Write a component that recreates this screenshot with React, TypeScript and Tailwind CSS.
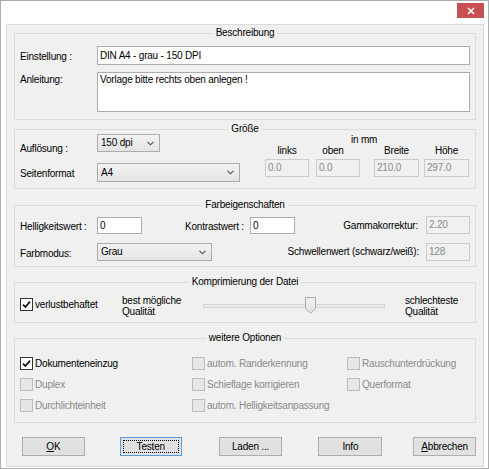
import React from 'react';

type Kids = { children?: React.ReactNode };

const line = 'border-[#dcdcdc]';

// Windows-style group box: caption sits centred in the top edge
const GroupBox = ({ title, bodyClass, children }: { title: string; bodyClass: string } & Kids) => (
  <div className="flex flex-col">
    <div className="flex h-[12px]">
      <div className={`mt-[6px] flex-1 border-l border-t ${line}`} />
      <span className="px-[3px] leading-[12px]">{title}</span>
      <div className={`mt-[6px] flex-1 border-r border-t ${line}`} />
    </div>
    <div className={`border-x border-b ${line} ${bodyClass}`}>{children}</div>
  </div>
);

const TextBox = ({ value, disabled, className = '' }: { value: string; disabled?: boolean; className?: string }) => (
  <div
    className={`flex items-center border px-[2px] leading-[12px] ${
      disabled ? 'border-[#cccccc] bg-[#f0f0f0] text-[#8a8a8a]' : 'border-[#abadb3] bg-white'
    } ${className}`}
  >
    {value}
  </div>
);

const Chevron = () => (
  <svg width="7" height="5" viewBox="0 0 7 5">
    <path d="M0.5 0.8 L3.5 3.8 L6.5 0.8" stroke="#505050" strokeWidth="1.1" fill="none" />
  </svg>
);

const Combo = ({ value, className = '' }: { value: string; className?: string }) => (
  <div
    className={`flex items-center justify-between border border-[#acacac] bg-linear-to-b from-[#f2f2f2] to-[#e4e4e4] pl-[3px] pr-[5px] leading-[12px] ${className}`}
  >
    <span>{value}</span>
    <Chevron />
  </div>
);

const Check = ({ checked, disabled }: { checked?: boolean; disabled?: boolean }) => (
  <span
    className={`flex h-[13px] w-[13px] shrink-0 items-center justify-center border ${
      disabled ? 'border-[#bcbcbc] bg-[#e6e6e6]' : 'border-[#333333] bg-white'
    }`}
  >
    {checked && (
      <svg width="9" height="9" viewBox="0 0 9 9">
        <path d="M1 4.6 L3.4 7 L8 1.6" stroke="#111" strokeWidth="1.7" fill="none" />
      </svg>
    )}
  </span>
);

const Option = ({ label, checked, disabled }: { label: string; checked?: boolean; disabled?: boolean }) => (
  <div className="flex h-[13px] items-center gap-[2px]">
    <Check checked={checked} disabled={disabled} />
    <span className={`leading-[12px] ${disabled ? 'text-[#8a8a8a]' : ''}`}>{label}</span>
  </div>
);

const Button = ({ children, className = '', focused }: { className?: string; focused?: boolean } & Kids) => (
  <button
    className={`h-[19px] border bg-[#e1e1e1] leading-[12px] ${
      focused ? 'border-[#569de5] p-[2px]' : 'border-[#adadad]'
    } ${className}`}
  >
    {focused ? (
      <span className="flex h-full w-full items-center justify-center border border-dotted border-black">{children}</span>
    ) : (
      children
    )}
  </button>
);

export default function App() {
  return (
    <div className="flex h-[469px] w-[489px] flex-col border border-[#adadad] bg-white font-['Liberation_Sans',Arial,sans-serif] text-[10px] tracking-[-0.2px] text-black">
      {/* title bar */}
      <div className="flex h-[23px] justify-end pr-[4px] pt-[2px]">
        <div className="flex h-[15px] w-[27px] items-center justify-center bg-[#c75050]">
          <svg width="8" height="8" viewBox="0 0 8 8">
            <path d="M1 1 L7 7 M7 1 L1 7" stroke="#fff" strokeWidth="1.6" />
          </svg>
        </div>
      </div>

      <div className="mb-[1px] ml-[5px] mr-[4px] flex h-[443px] flex-col border border-[#dadada] bg-[#f0f0f0] px-[7px] pt-[2px]">
        <GroupBox title="Beschreibung" bodyClass="flex h-[81px] flex-col gap-[7px] px-[5px] pt-[7px]">
          <div className="flex">
            <span className="mt-[5px] w-[77px] leading-[12px]">Einstellung :</span>
            <TextBox value="DIN A4 - grau - 150 DPI" className="h-[19px] flex-1" />
          </div>
          <div className="flex">
            <span className="mt-[2px] w-[77px] leading-[12px]">Anleitung:</span>
            <TextBox value="Vorlage bitte rechts oben anlegen !" className="h-[40px] flex-1 !items-start pt-[1px]" />
          </div>
        </GroupBox>

        <div className="mt-[3px]">
          <GroupBox title="Größe" bodyClass="flex h-[54px] pl-[5px]">
            <div className="-mt-[1px] flex flex-col">
              <div className="flex">
                <span className="mt-[9px] w-[77px] leading-[12px]">Auflösung :</span>
                <Combo value="150 dpi" className="h-[18px] w-[63px]" />
              </div>
              <div className="mt-[8px] flex">
                <span className="mt-[5px] w-[77px] leading-[12px]">Seitenformat</span>
                <Combo value="A4" className="h-[19px] w-[143px]" />
              </div>
            </div>
            <div className="-mt-[1px] ml-[25px] flex flex-col">
              <span className="ml-[86px] leading-[12px]">in mm</span>
              <div className="-mt-[1px] flex leading-[12px]">
                <span className="w-[44px] text-center">links</span>
                <span className="ml-[7px] w-[44px] pr-[10px] text-center">oben</span>
                <span className="ml-[14px] w-[45px] text-center">Breite</span>
                <span className="ml-[5px] w-[45px] text-center">Höhe</span>
              </div>
              <div className="mt-[2px] flex">
                <TextBox value="0.0" disabled className="h-[18px] w-[44px]" />
                <TextBox value="0.0" disabled className="ml-[7px] h-[18px] w-[44px]" />
                <TextBox value="210.0" disabled className="ml-[14px] h-[18px] w-[45px]" />
                <TextBox value="297.0" disabled className="ml-[5px] h-[18px] w-[45px]" />
              </div>
            </div>
          </GroupBox>
        </div>

        <div className="mt-[10px]">
          <GroupBox title="Farbeigenschaften" bodyClass="flex h-[56px] flex-col px-[5px] pt-[5px]">
            <div className="flex h-[18px]">
              <span className="mt-[5px] w-[77px] leading-[12px]">Helligkeitswert :</span>
              <TextBox value="0" className="mt-[1px] h-[17px] w-[45px]" />
              <span className="ml-[43px] mt-[5px] w-[65px] leading-[12px]">Kontrastwert :</span>
              <TextBox value="0" className="mt-[1px] h-[17px] w-[45px]" />
              <span className="mt-[4px] flex-1 pr-[8px] text-right leading-[12px]">Gammakorrektur:</span>
              <TextBox value="2.20" disabled className="h-[18px] w-[44px]" />
            </div>
            <div className="mt-[9px] flex h-[18px]">
              <span className="mt-[5px] w-[77px] leading-[12px]">Farbmodus:</span>
              <Combo value="Grau" className="h-[18px] w-[115px]" />
              <span className="mt-[3px] flex-1 pr-[7px] text-right leading-[12px]">Schwellenwert (schwarz/weiß):</span>
              <TextBox value="128" disabled className="h-[18px] w-[44px]" />
            </div>
          </GroupBox>
        </div>

        <div className="mt-[9px]">
          <GroupBox title="Komprimierung der Datei" bodyClass="flex h-[35px] items-start pl-[5px] pt-[7px]">
            <div className="mt-[3px] flex w-[102px] items-center gap-[2px]">
              <Check checked />
              <span className="leading-[12px]">verlustbehaftet</span>
            </div>
            <div className="w-[81px] leading-[11px]">
              best mögliche
              <br />
              Qualität
            </div>
            {/* quality slider */}
            <div className="relative mt-[2px] flex h-[17px] w-[182px] items-center">
              <div className="h-[4px] w-full border border-[#d6d6d6] bg-[#e7eaea]" />
              <svg className="absolute left-[102px] top-0" width="11" height="17" viewBox="0 0 11 17">
                <defs>
                  <linearGradient id="thumb" x1="0" y1="0" x2="0" y2="1">
                    <stop offset="0" stopColor="#f2f2f2" />
                    <stop offset="1" stopColor="#e3e3e3" />
                  </linearGradient>
                </defs>
                <path d="M0.5 0.5 H10.5 V11.5 L5.5 16.3 L0.5 11.5 Z" fill="url(#thumb)" stroke="#acacac" />
              </svg>
            </div>
            <div className="ml-[20px] leading-[11px]">
              schlechteste
              <br />
              Qualität
            </div>
          </GroupBox>
        </div>

        <div className="mt-[9px]">
          <GroupBox title="weitere Optionen" bodyClass="grid h-[79px] grid-cols-[172px_155px_1fr] content-start gap-y-[8px] pl-[5px] pt-[13px]">
            <Option label="Dokumenteneinzug" checked />
            <Option label="autom. Randerkennung" disabled />
            <Option label="Rauschunterdrückung" disabled />
            <Option label="Duplex" disabled />
            <Option label="Schieflage korrigieren" disabled />
            <Option label="Querformat" disabled />
            <Option label="Durchlichteinheit" disabled />
            <Option label="autom. Helligkeitsanpassung" disabled />
          </GroupBox>
        </div>

        <div className="mt-[14px] flex pl-[8px]">
          <Button className="w-[64px]">
            <span className="underline">O</span>K
          </Button>
          <Button className="ml-[35px] w-[63px]" focused>
            Testen
          </Button>
          <Button className="ml-[37px] w-[65px]">Laden ...</Button>
          <Button className="ml-[36px] w-[65px]">Info</Button>
          <Button className="ml-[31px] w-[64px]">
            <span className="underline">A</span>bbrechen
          </Button>
        </div>
      </div>
    </div>
  );
}
